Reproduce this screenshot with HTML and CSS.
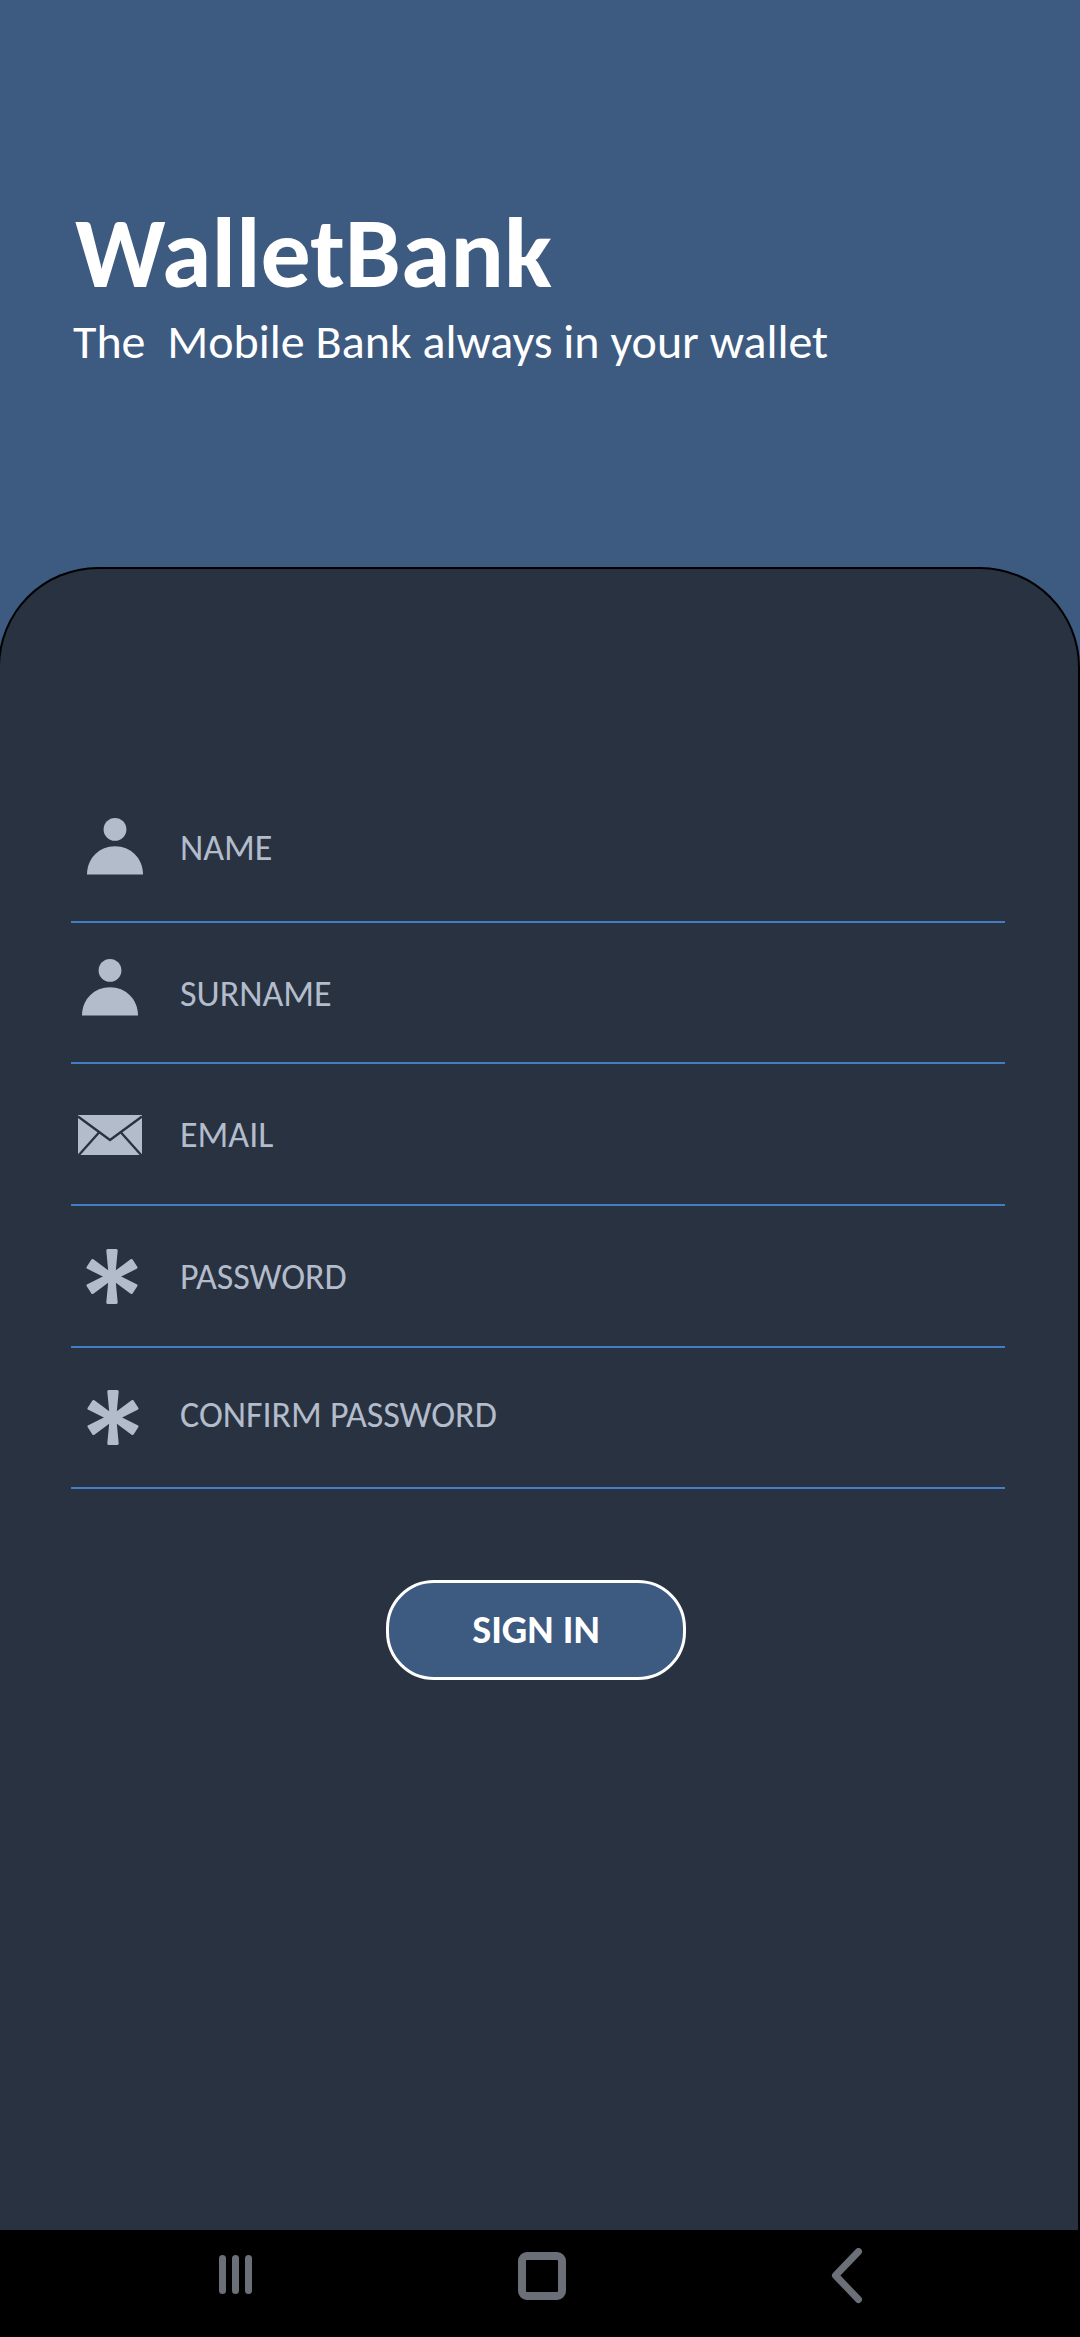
FILE: index.html
```html
<!DOCTYPE html>
<html lang="en">
<head>
<meta charset="utf-8">
<title>WalletBank</title>
<link rel="stylesheet" href="styles.css">
</head>
<body>
<svg class="defs" width="0" height="0" aria-hidden="true">
  <symbol id="person" viewBox="0 0 56 57"><circle cx="28" cy="11.4" r="11.4"/><path d="M0 56.6C0 40 12.500 28.200 28 28.200S56 40 56 56.600Z"/></symbol>
  <symbol id="star" viewBox="0 0 52 55">
    <path stroke-width="3" stroke-linejoin="round" stroke="currentColor" d="M21.800 1.500H30.200L28 24.500 45.500 11.500 50 18.500 32 27.500 50 36.500 45.500 43.500 28 30.500 30.200 53.500H21.800L24 30.500 6.500 43.500 2 36.500 20 27.500 2 18.500 6.500 11.500 24 24.500Z"/>
  </symbol>
</svg>
<div class="screen">
  <header class="hero">
    <h1 class="title">WalletBank</h1>
    <p class="tagline">The&nbsp; Mobile Bank always in your wallet</p>
  </header>
  <main class="panel">
    <div class="field field-name"><svg class="icon person"><use href="#person"/></svg><span class="label">NAME</span></div>
    <div class="field field-surname"><svg class="icon person"><use href="#person"/></svg><span class="label">SURNAME</span></div>
    <div class="field field-email"><svg class="icon mail" viewBox="0 0 64 40"><path d="M0 0H64V40H0Z"/><path class="crease" d="M0 1.500L32 25 64 1.500M0 41L21 17.500M64 41L43 17.500"/></svg><span class="label">EMAIL</span></div>
    <div class="field field-password"><svg class="icon star"><use href="#star"/></svg><span class="label">PASSWORD</span></div>
    <div class="field field-confirm"><svg class="icon star"><use href="#star"/></svg><span class="label">CONFIRM PASSWORD</span></div>
    <button class="signin">SIGN IN</button>
  </main>
  <nav class="navbar">
    <span class="recents"><i></i><i></i><i></i></span>
    <span class="home"></span>
    <svg class="back" viewBox="0 0 32 56"><path d="M27.500 3.500L4.500 27.500 27.500 51.500"/></svg>
  </nav>
</div>
</body>
</html>
```
FILE: styles.css
```css
* { box-sizing: border-box; }
body { margin: 0; background: #3d5a80; font-family: Carlito, Lato, "Liberation Sans", sans-serif; }
.defs { display: block; }
.screen { width: 1080px; height: 2337px; display: flex; flex-direction: column; overflow: hidden; }
.hero { height: 567px; flex: none; padding: 200px 0 0 73px; color: #fff; white-space: nowrap; }
.title { margin: 0 0 0 2px; font-size: 100px; line-height: 106px; font-weight: 700; }
.tagline { margin: 10px 0 0; font-size: 48px; line-height: 52px; }
.panel { flex: none; height: 1663px; width: 1082px; margin-left: -2px; padding: 213px 0 0 71px; background: #293241; border: 2px solid #000; border-bottom: 0; border-radius: 100px 100px 0 0; }
.field { width: 934px; height: 142px; border-bottom: 2px solid #447cc6; display: flex; align-items: flex-start; }
.field-name, .field-surname { height: 141px; }
.field-confirm { height: 141px; }
.icon { flex: none; fill: #b3bccb; color: #b3bccb; display: block; }
.person { width: 56px; height: 57px; margin: 36px 36px 0 16px; }
.field-surname .person { margin: 36px 41px 0 11px; }
.mail { width: 64px; height: 40px; margin: 51px 37px 0 7px; }
.crease { fill: none; stroke: #293241; stroke-width: 2.3; }
.star { width: 52px; height: 55px; margin: 43px 41px 0 15px; }
.field-confirm .star { margin: 42px 40px 0 16px; }
.label { font-size: 36px; line-height: 40px; color: #b3bccb; margin: 51px 0 0 1px; white-space: nowrap; }
.field-name .label { margin-top: 46px; }
.field-confirm .label { margin-top: 47px; }
.signin { display: flex; justify-content: center; align-items: center; width: 300px; height: 100px; margin: 91px 0 0 315px; padding: 0 0 1px; border: 3px solid #fff; border-radius: 48px; background: #3d5a80; color: #fff; font: 700 40px/40px Carlito, Lato, "Liberation Sans", sans-serif; }
.navbar { height: 107px; flex: none; background: #000; display: flex; align-items: flex-start; padding-left: 219px; }
.recents { display: flex; gap: 6px; margin-top: 25px; }
.recents i { width: 7px; height: 39px; border-radius: 3.5px; background: #6b7078; }
.home { width: 48px; height: 48px; border: 8px solid #6b7078; border-radius: 9px; margin: 22px 0 0 266px; }
.back { width: 32px; height: 56px; margin: 18px 0 0 265px; fill: none; stroke: #6b7078; stroke-width: 7; stroke-linecap: round; stroke-linejoin: round; }
```
